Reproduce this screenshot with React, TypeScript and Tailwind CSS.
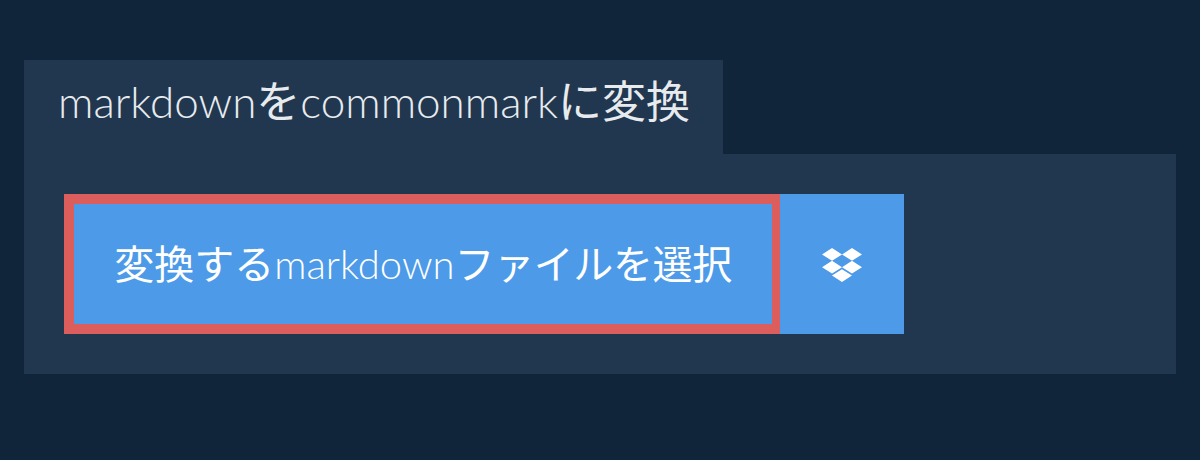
import React from 'react';
import { FaDropbox } from 'react-icons/fa';

export default function App() {
  return (
    <div className="w-[1200px] h-[460px] bg-[#102539] pt-[60px] px-6 overflow-hidden font-['Lato','Noto_Sans_CJK_JP',sans-serif]">
      {/* Title tab */}
      <div className="w-[699px] h-[94px] pl-[34px] bg-[#21374f] text-[#e8ebee]">
        <h1 className="text-[44px] leading-[82px] font-light whitespace-nowrap">
          markdown<span className="font-normal">を</span>commonmark<span className="font-normal">に変換</span>
        </h1>
      </div>

      {/* Panel */}
      <div className="h-[220px] bg-[#21374f] p-10">
        <div className="flex h-[140px] w-fit text-white">
          <button className="w-[716px] h-full bg-[#4c9ae8] border-[10px] border-r-8 border-[#dc5e5c] text-[40px] font-light whitespace-nowrap">
            <span className="font-normal">変換する</span>markdown<span className="font-normal tracking-[-0.4px]">ファイルを選択</span>
          </button>
          <button className="w-[124px] h-full bg-[#4c9ae8] flex items-center justify-center">
            <FaDropbox className="w-10 h-10 mt-[2px]" />
          </button>
        </div>
      </div>
    </div>
  );
}
